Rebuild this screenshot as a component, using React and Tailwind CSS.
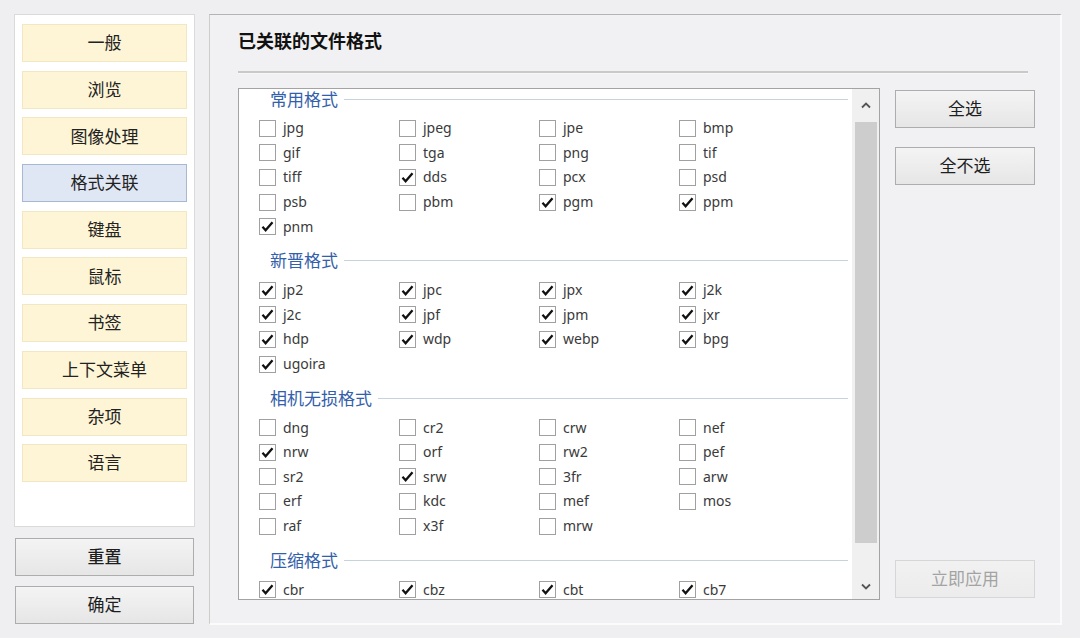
import { useState } from 'react'

const NAV = ['一般', '浏览', '图像处理', '格式关联', '键盘', '鼠标', '书签', '上下文菜单', '杂项', '语言']

// 格式分组，1 = 已关联
const GROUPS = [
  {
    title: '常用格式',
    items: [
      ['jpg', 0], ['jpeg', 0], ['jpe', 0], ['bmp', 0],
      ['gif', 0], ['tga', 0], ['png', 0], ['tif', 0],
      ['tiff', 0], ['dds', 1], ['pcx', 0], ['psd', 0],
      ['psb', 0], ['pbm', 0], ['pgm', 1], ['ppm', 1],
      ['pnm', 1],
    ],
  },
  {
    title: '新晋格式',
    items: [
      ['jp2', 1], ['jpc', 1], ['jpx', 1], ['j2k', 1],
      ['j2c', 1], ['jpf', 1], ['jpm', 1], ['jxr', 1],
      ['hdp', 1], ['wdp', 1], ['webp', 1], ['bpg', 1],
      ['ugoira', 1],
    ],
  },
  {
    title: '相机无损格式',
    items: [
      ['dng', 0], ['cr2', 0], ['crw', 0], ['nef', 0],
      ['nrw', 1], ['orf', 0], ['rw2', 0], ['pef', 0],
      ['sr2', 0], ['srw', 1], ['3fr', 0], ['arw', 0],
      ['erf', 0], ['kdc', 0], ['mef', 0], ['mos', 0],
      ['raf', 0], ['x3f', 0], ['mrw', 0],
    ],
  },
  {
    title: '压缩格式',
    items: [['cbr', 1], ['cbz', 1], ['cbt', 1], ['cb7', 1]],
  },
]

const initialChecked = () => {
  const map = {}
  GROUPS.forEach((g) => g.items.forEach(([ext, on]) => (map[ext] = !!on)))
  return map
}

const FONT = { fontFamily: '"Noto Sans", "Noto Sans CJK SC", sans-serif' }

function CheckBox({ label, checked, onChange }) {
  return (
    <label className="flex items-center h-[24.6px] cursor-default select-none">
      <span className="w-[17px] h-[17px] border border-[#a0a0a0] bg-white flex items-center justify-center shrink-0">
        {checked && (
          <svg width="13" height="13" viewBox="0 0 13 13">
            <path d="M1.5 6.8 L4.6 10.2 L11.5 2.2" fill="none" stroke="#111" strokeWidth="2.3" strokeLinejoin="miter" />
          </svg>
        )}
      </span>
      <input type="checkbox" className="hidden" checked={checked} onChange={onChange} />
      <span className="ml-[7px] text-[14px] text-[#3a3a3a] leading-none">{label}</span>
    </label>
  )
}

function PushButton({ children, disabled, onClick, className = '' }) {
  return (
    <button
      disabled={disabled}
      onClick={onClick}
      className={`h-[38px] w-full border text-[17px] bg-gradient-to-b ${
        disabled
          ? 'border-[#d6d6d6] text-[#a3a3a3] from-[#f1f1f1] to-[#ececec]'
          : 'border-[#adadad] text-[#1e1e1e] from-[#f4f4f4] to-[#e6e6e6]'
      } ${className}`}
    >
      {children}
    </button>
  )
}

export default function App() {
  const [active, setActive] = useState('格式关联')
  const [checked, setChecked] = useState(initialChecked)

  const setAll = (value) => {
    const next = {}
    Object.keys(checked).forEach((k) => (next[k] = value))
    setChecked(next)
  }

  return (
    <div className="w-[1080px] h-[638px] bg-[#efeff1] flex pl-[14px] pt-[14px] overflow-hidden" style={FONT}>
      {/* ── 左侧导航 ── */}
      <div className="w-[181px] shrink-0 flex flex-col">
        <div className="h-[513px] bg-white border border-[#dadada] px-[7px] pt-[9px] flex flex-col gap-[8.7px]">
          {NAV.map((name) => (
            <button
              key={name}
              onClick={() => setActive(name)}
              className={`h-[38px] shrink-0 border text-[17px] text-[#222] ${
                name === active
                  ? 'bg-[#e0e7f4] border-[#a9b8d2]'
                  : 'bg-[#fdf5d6] border-[#f1e7c2]'
              }`}
            >
              {name}
            </button>
          ))}
        </div>
        <div className="ml-[1px] w-[179px] mt-[11px] flex flex-col gap-[10px]">
          <PushButton className="font-medium">重置</PushButton>
          <PushButton>确定</PushButton>
        </div>
      </div>

      {/* ── 主面板 ── */}
      <div className="ml-[14px] w-[853px] h-[611px] bg-[#f1f1f3] border-t border-t-[#b4b4b4] border-l border-l-[#cdcdcd] border-r-2 border-r-[#fbfbfb] border-b-2 border-b-[#fbfbfb] pl-[28px] pt-[14px] flex flex-col">
        <h2 className="text-[18px] font-bold leading-[24px] text-[#111]">已关联的文件格式</h2>
        <div className="mt-[18px] w-[790px] h-[3px] bg-[#c9c9c9] border-b border-b-[#f7f7f7]" />

        <div className="mt-[14px] flex">
          {/* 列表 */}
          <div className="w-[642px] h-[512px] border border-[#a3a3a3] bg-white flex overflow-hidden">
            <div className="flex-1 overflow-hidden">
              {GROUPS.map((group, gi) => (
                <div key={group.title} className={gi === 0 ? '' : 'mt-[12px]'}>
                  <div className="h-[20px] flex items-center pl-[31px] pr-[4px]">
                    <span className="text-[17px] text-[#3360aa] leading-none">{group.title}</span>
                    <span className="flex-1 ml-[6px] h-px bg-[#c7d2dc]" />
                  </div>
                  <div className="mt-[7px] pl-[20px] grid grid-cols-[140px_140px_140px_140px]">
                    {group.items.map(([ext]) => (
                      <CheckBox
                        key={ext}
                        label={ext}
                        checked={checked[ext]}
                        onChange={() => setChecked({ ...checked, [ext]: !checked[ext] })}
                      />
                    ))}
                  </div>
                </div>
              ))}
            </div>

            {/* 滚动条 */}
            <div className="w-[27px] shrink-0 bg-[#f0f0f0] flex flex-col items-center">
              <div className="h-[33px] flex items-center justify-center">
                <svg width="10" height="7" viewBox="0 0 10 7">
                  <path d="M1 5.5 L5 1.5 L9 5.5" fill="none" stroke="#555" strokeWidth="1.8" />
                </svg>
              </div>
              <div className="w-[22px] h-[421px] bg-[#cdcdcd]" />
              <div className="flex-1 flex items-end justify-center pb-[9px]">
                <svg width="10" height="7" viewBox="0 0 10 7">
                  <path d="M1 1.5 L5 5.5 L9 1.5" fill="none" stroke="#555" strokeWidth="1.8" />
                </svg>
              </div>
            </div>
          </div>

          {/* 右侧按钮 */}
          <div className="ml-[15px] w-[140px] h-[512px] py-[2px] flex flex-col">
            <PushButton onClick={() => setAll(true)}>全选</PushButton>
            <div className="mt-[19px]">
              <PushButton onClick={() => setAll(false)}>全不选</PushButton>
            </div>
            <div className="flex-1" />
            <PushButton disabled>立即应用</PushButton>
          </div>
        </div>
      </div>
    </div>
  )
}
